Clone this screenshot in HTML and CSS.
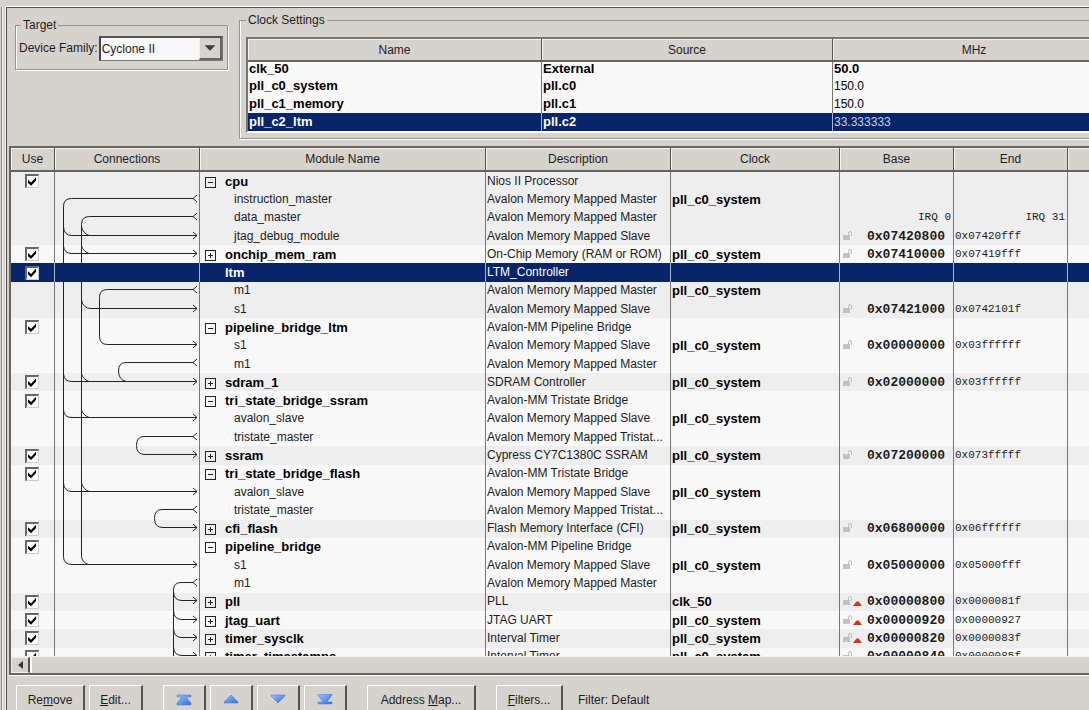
FILE: index.html
```html
<!DOCTYPE html>
<html lang="en">
<head>
<meta charset="utf-8">
<title>System Contents</title>
<link rel="stylesheet" href="styles.css">
</head>
<body>
<svg class="defs" aria-hidden="true">
  <symbol id="lock" viewBox="0 0 10 10"><path d="M0 4h7v5H0z" fill="#c2c2c2"/><path d="M5.500 4V2.500Q5.500.5 7 .5T8.500 2.500V5" fill="none" stroke="#bdbdbd"/></symbol>
  <symbol id="warn" viewBox="0 0 9 5"><path d="M0 5L3.500.5h2L9 5z" fill="#d8301c"/></symbol>
  <linearGradient id="blue" x1="0" y1="0" x2="1" y2="1"><stop offset="0" stop-color="#9cc4ff"/><stop offset="1" stop-color="#2f6fdc"/></linearGradient>
</svg>
<div class="app">
  <main class="panel">
    <div class="top">
      <fieldset class="box target">
        <legend>Target</legend>
        <label for="family">Device Family:</label>
        <span class="combo">
          <select id="family"><option>Cyclone II</option></select>
          <svg class="arrow" viewBox="0 0 22 22" aria-hidden="true"><path d="M5 8h12l-6 6z" fill="#3a3a3a"/></svg>
        </span>
      </fieldset>
      <fieldset class="box clocks">
        <legend>Clock Settings</legend>
        <div class="clock-view">
          <table class="clock-table">
            <thead><tr><th>Name</th><th>Source</th><th>MHz</th></tr></thead>
            <tbody>
              <tr><td>clk_50</td><td>External</td><td>50.0</td></tr>
              <tr><td>pll_c0_system</td><td>pll.c0</td><td class="plain">150.0</td></tr>
              <tr><td>pll_c1_memory</td><td>pll.c1</td><td class="plain">150.0</td></tr>
              <tr class="selected"><td>pll_c2_ltm</td><td>pll.c2</td><td class="plain">33.333333</td></tr>
            </tbody>
          </table>
        </div>
      </fieldset>
    </div>

    <section class="modules">
      <div class="view">
        <table class="module-table">
          <colgroup><col class="c-use"><col class="c-conn"><col class="c-name"><col class="c-desc"><col class="c-clock"><col class="c-addr"><col class="c-addr"><col></colgroup>
          <thead><tr><th>Use</th><th>Connections</th><th>Module Name</th><th>Description</th><th>Clock</th><th>Base</th><th>End</th><th></th></tr></thead>
          <tbody>
            <tr><td><input type="checkbox" checked aria-label="Use cpu"></td><td></td><td class="mod"><button class="tree minus" aria-label="Collapse cpu"></button>cpu</td><td>Nios II Processor</td><td></td><td></td><td></td><td></td></tr>
            <tr><td></td><td></td><td class="port">instruction_master</td><td>Avalon Memory Mapped Master</td><td class="clk">pll_c0_system</td><td></td><td></td><td></td></tr>
            <tr><td></td><td></td><td class="port">data_master</td><td>Avalon Memory Mapped Master</td><td></td><td class="irq">IRQ 0</td><td class="irq">IRQ 31</td><td></td></tr>
            <tr><td></td><td></td><td class="port">jtag_debug_module</td><td>Avalon Memory Mapped Slave</td><td></td><td class="base"><svg class="lock"><use href="#lock"/></svg>0x07420800</td><td class="end">0x07420fff</td><td></td></tr>
          </tbody>
          <tbody>
            <tr><td><input type="checkbox" checked aria-label="Use onchip_mem_ram"></td><td></td><td class="mod"><button class="tree plus" aria-label="Expand onchip_mem_ram"></button>onchip_mem_ram</td><td>On-Chip Memory (RAM or ROM)</td><td class="clk">pll_c0_system</td><td class="base"><svg class="lock"><use href="#lock"/></svg>0x07410000</td><td class="end">0x07419fff</td><td></td></tr>
          </tbody>
          <tbody>
            <tr class="selected"><td><input type="checkbox" checked aria-label="Use ltm"></td><td></td><td class="mod"><button class="tree minus" aria-label="Collapse ltm"></button>ltm</td><td>LTM_Controller</td><td></td><td></td><td></td><td></td></tr>
            <tr><td></td><td></td><td class="port">m1</td><td>Avalon Memory Mapped Master</td><td class="clk">pll_c0_system</td><td></td><td></td><td></td></tr>
            <tr><td></td><td></td><td class="port">s1</td><td>Avalon Memory Mapped Slave</td><td></td><td class="base"><svg class="lock"><use href="#lock"/></svg>0x07421000</td><td class="end">0x0742101f</td><td></td></tr>
          </tbody>
          <tbody>
            <tr><td><input type="checkbox" checked aria-label="Use pipeline_bridge_ltm"></td><td></td><td class="mod"><button class="tree minus" aria-label="Collapse pipeline_bridge_ltm"></button>pipeline_bridge_ltm</td><td>Avalon-MM Pipeline Bridge</td><td></td><td></td><td></td><td></td></tr>
            <tr><td></td><td></td><td class="port">s1</td><td>Avalon Memory Mapped Slave</td><td class="clk">pll_c0_system</td><td class="base"><svg class="lock"><use href="#lock"/></svg>0x00000000</td><td class="end">0x03ffffff</td><td></td></tr>
            <tr><td></td><td></td><td class="port">m1</td><td>Avalon Memory Mapped Master</td><td></td><td></td><td></td><td></td></tr>
          </tbody>
          <tbody>
            <tr><td><input type="checkbox" checked aria-label="Use sdram_1"></td><td></td><td class="mod"><button class="tree plus" aria-label="Expand sdram_1"></button>sdram_1</td><td>SDRAM Controller</td><td class="clk">pll_c0_system</td><td class="base"><svg class="lock"><use href="#lock"/></svg>0x02000000</td><td class="end">0x03ffffff</td><td></td></tr>
          </tbody>
          <tbody>
            <tr><td><input type="checkbox" checked aria-label="Use tri_state_bridge_ssram"></td><td></td><td class="mod"><button class="tree minus" aria-label="Collapse tri_state_bridge_ssram"></button>tri_state_bridge_ssram</td><td>Avalon-MM Tristate Bridge</td><td></td><td></td><td></td><td></td></tr>
            <tr><td></td><td></td><td class="port">avalon_slave</td><td>Avalon Memory Mapped Slave</td><td class="clk">pll_c0_system</td><td></td><td></td><td></td></tr>
            <tr><td></td><td></td><td class="port">tristate_master</td><td>Avalon Memory Mapped Tristat...</td><td></td><td></td><td></td><td></td></tr>
          </tbody>
          <tbody>
            <tr><td><input type="checkbox" checked aria-label="Use ssram"></td><td></td><td class="mod"><button class="tree plus" aria-label="Expand ssram"></button>ssram</td><td>Cypress CY7C1380C SSRAM</td><td class="clk">pll_c0_system</td><td class="base"><svg class="lock"><use href="#lock"/></svg>0x07200000</td><td class="end">0x073fffff</td><td></td></tr>
          </tbody>
          <tbody>
            <tr><td><input type="checkbox" checked aria-label="Use tri_state_bridge_flash"></td><td></td><td class="mod"><button class="tree minus" aria-label="Collapse tri_state_bridge_flash"></button>tri_state_bridge_flash</td><td>Avalon-MM Tristate Bridge</td><td></td><td></td><td></td><td></td></tr>
            <tr><td></td><td></td><td class="port">avalon_slave</td><td>Avalon Memory Mapped Slave</td><td class="clk">pll_c0_system</td><td></td><td></td><td></td></tr>
            <tr><td></td><td></td><td class="port">tristate_master</td><td>Avalon Memory Mapped Tristat...</td><td></td><td></td><td></td><td></td></tr>
          </tbody>
          <tbody>
            <tr><td><input type="checkbox" checked aria-label="Use cfi_flash"></td><td></td><td class="mod"><button class="tree plus" aria-label="Expand cfi_flash"></button>cfi_flash</td><td>Flash Memory Interface (CFI)</td><td class="clk">pll_c0_system</td><td class="base"><svg class="lock"><use href="#lock"/></svg>0x06800000</td><td class="end">0x06ffffff</td><td></td></tr>
          </tbody>
          <tbody>
            <tr><td><input type="checkbox" checked aria-label="Use pipeline_bridge"></td><td></td><td class="mod"><button class="tree minus" aria-label="Collapse pipeline_bridge"></button>pipeline_bridge</td><td>Avalon-MM Pipeline Bridge</td><td></td><td></td><td></td><td></td></tr>
            <tr><td></td><td></td><td class="port">s1</td><td>Avalon Memory Mapped Slave</td><td class="clk">pll_c0_system</td><td class="base"><svg class="lock"><use href="#lock"/></svg>0x05000000</td><td class="end">0x05000fff</td><td></td></tr>
            <tr><td></td><td></td><td class="port">m1</td><td>Avalon Memory Mapped Master</td><td></td><td></td><td></td><td></td></tr>
          </tbody>
          <tbody>
            <tr><td><input type="checkbox" checked aria-label="Use pll"></td><td></td><td class="mod"><button class="tree plus" aria-label="Expand pll"></button>pll</td><td>PLL</td><td class="clk">clk_50</td><td class="base"><svg class="lock"><use href="#lock"/></svg><svg class="warn"><use href="#warn"/></svg>0x00000800</td><td class="end">0x0000081f</td><td></td></tr>
          </tbody>
          <tbody>
            <tr><td><input type="checkbox" checked aria-label="Use jtag_uart"></td><td></td><td class="mod"><button class="tree plus" aria-label="Expand jtag_uart"></button>jtag_uart</td><td>JTAG UART</td><td class="clk">pll_c0_system</td><td class="base"><svg class="lock"><use href="#lock"/></svg><svg class="warn"><use href="#warn"/></svg>0x00000920</td><td class="end">0x00000927</td><td></td></tr>
          </tbody>
          <tbody>
            <tr><td><input type="checkbox" checked aria-label="Use timer_sysclk"></td><td></td><td class="mod"><button class="tree plus" aria-label="Expand timer_sysclk"></button>timer_sysclk</td><td>Interval Timer</td><td class="clk">pll_c0_system</td><td class="base"><svg class="lock"><use href="#lock"/></svg><svg class="warn"><use href="#warn"/></svg>0x00000820</td><td class="end">0x0000083f</td><td></td></tr>
          </tbody>
          <tbody>
            <tr><td><input type="checkbox" checked aria-label="Use timer_timestamps"></td><td></td><td class="mod"><button class="tree plus" aria-label="Expand timer_timestamps"></button>timer_timestamps</td><td>Interval Timer</td><td class="clk">pll_c0_system</td><td class="base"><svg class="lock"><use href="#lock"/></svg><svg class="warn"><use href="#warn"/></svg>0x00000840</td><td class="end">0x0000085f</td><td></td></tr>
          </tbody>
        </table>
        <svg class="wires" viewBox="0 0 144 494" aria-hidden="true">
          <!-- instruction_master and data_master buses -->
          <path d="M138 26.500H16.500Q8.500 26.500 8.500 34.500V384.500Q8.500 392.500 17 392.500H142"/>
          <path d="M138 44.500H34.500Q26.500 44.500 26.500 52.500V384.500Q27 390 33 392.500"/>
          <path d="M8.500 55Q9 63.500 17 63.500H142M8.500 74Q9 81.500 17 81.500H142M8.500 202Q9 209.500 17 209.500H142M8.500 238Q9 245.500 17 245.500H142M8.500 311Q9 319.500 17 319.500H142"/>
          <path d="M26.500 55Q28 61 34 63.500M26.500 74Q28 79 34 81.500M26.500 128Q28 136.500 36 136.500H142M26.500 202Q28 207 34 209.500M26.500 238Q28 243 34 245.500M26.500 311Q28 317 34 319.500"/>
          <!-- ltm and bridge links -->
          <path d="M138 117.500H52.500Q44.500 117.500 44.500 125.500V164.500Q44.500 172.500 52.500 172.500H142"/>
          <path d="M138 190.500H71Q63.500 190.500 63.500 199T71 209.500"/>
          <path d="M138 264.500H89Q81.500 264.500 81.500 273.500T90 282.500H142"/>
          <path d="M138 337.500H107Q99.500 337.500 99.500 346.500T108 355.500H142"/>
          <path d="M138 410.500H126Q118.500 410.500 118.500 418V494M118.500 420Q119 428.500 127 428.500H142M118.500 439Q119 447.500 127 447.500H142M118.500 457Q119 465.500 127 465.500H142M118.500 475Q119 483.500 127 483.500H142"/>
          <!-- master forks -->
          <path d="M142 23L138 26.500L142 30M142 41L138 44.500L142 48M142 114L138 117.500L142 121M142 187L138 190.500L142 194M142 261L138 264.500L142 268M142 334L138 337.500L142 341M142 407L138 410.500L142 414"/>
          <!-- slave arrows -->
          <path d="M138 60L142 63.500L138 67M138 78L142 81.500L138 85M138 133L142 136.500L138 140M138 169L142 172.500L138 176M138 206L142 209.500L138 213M138 242L142 245.500L138 249M138 279L142 282.500L138 286M138 316L142 319.500L138 323M138 352L142 355.500L138 359M138 389L142 392.500L138 396M138 425L142 428.500L138 432M138 444L142 447.500L138 451M138 462L142 465.500L138 469M138 480L142 483.500L138 487"/>
        </svg>
      </div>
      <div class="scrollbar">
        <button class="scroll-left" aria-label="Scroll left"><svg viewBox="0 0 6 10"><path d="M6 1v8L1 5z" fill="#333"/></svg></button>
        <div class="thumb"></div>
      </div>
    </section>

    <div class="toolbar">
      <button class="btn remove">Re<u>m</u>ove</button>
      <button class="btn edit"><u>E</u>dit...</button>
      <div class="moves">
        <button class="btn move" aria-label="Move to top"><svg viewBox="0 0 16 12"><path d="M1 1h14v2h-5l5 6v2H1V9l5-6H1z" fill="url(#blue)" stroke="#3f74cc" stroke-width=".5"/></svg></button>
        <button class="btn move" aria-label="Move up"><svg viewBox="0 0 16 12"><path d="M8 1l7 7v1H1V8z" fill="url(#blue)" stroke="#3f74cc" stroke-width=".5"/></svg></button>
        <button class="btn move" aria-label="Move down"><svg viewBox="0 0 16 12"><path d="M1 1h14v1L8 9 1 2z" fill="url(#blue)" stroke="#3f74cc" stroke-width=".5"/></svg></button>
        <button class="btn move" aria-label="Move to bottom"><svg viewBox="0 0 16 12"><path d="M1 0h14v1l-5 7h5v2H1V8h5L1 1z" fill="url(#blue)" stroke="#3f74cc" stroke-width=".5"/></svg></button>
      </div>
      <button class="btn address">Address <u>M</u>ap...</button>
      <button class="btn filters"><u>F</u>ilters...</button>
      <span class="filter">Filter: Default</span>
    </div>
  </main>
</div>
</body>
</html>
```

FILE: styles.css
```css
* { box-sizing: border-box; }
body {
  margin: 0;
  overflow: hidden;
  background: #d6d3ce;
  color: #1c1c1c;
  font: 12px/16px "Liberation Sans", Arial, sans-serif;
}
.defs { position: absolute; width: 0; height: 0; }
button, select, input { font: inherit; color: inherit; margin: 0; }

/* The window is slightly narrower than its contents. */
.app {
  width: calc(100vw + 28px);
  height: 100vh;
  padding: 7px 0 0 6px;
}
.panel {
  display: flex;
  flex-direction: column;
  height: 100%;
  border-top: 1px solid #55534f;
  border-left: 1px solid #55534f;
  box-shadow: 0 -1px #fff, -1px 0 #f0eeea, -3px 0 #d6d3ce, -4px 0 #f4f3f0, -5px 0 #8a8884;
}

.top { display: flex; gap: 11px; padding: 4px 0 0 8px; height: 138px; }
.box {
  margin: 0;
  border: 1px solid #97958f;
  box-shadow: 1px 1px #fff, inset 1px 0 #fff;
}
.box legend { padding: 0 2px; }
.target {
  display: flex;
  align-items: center;
  width: 213px;
  height: 53px;
  margin-top: 5px;
  padding: 0 4px 6px 3px;
}
.target legend { margin-left: 2px; }
.combo {
  position: relative;
  flex: 1;
  height: 25px;
  margin-left: 1px;
  border: 1px solid #777;
  border-top: 2px solid #555;
  border-left: 2px solid #444;
}
.combo select {
  width: 100%;
  height: 100%;
  padding: 0 1px;
  border: 0;
  border-radius: 0;
  background: #f8f8f8;
  appearance: none;
}
.combo .arrow {
  position: absolute;
  top: 0;
  right: 0;
  width: 23px;
  height: 22px;
  background: #d6d3ce;
  border-right: 2px solid #666;
  border-bottom: 2px solid #666;
  border-left: 1px solid #eee;
  pointer-events: none;
}
.clocks { flex: 1; min-width: 0; height: 127px; padding: 9px 0 0 6px; }
.clock-view { border: solid #77756f; border-width: 2px 0 0 2px; border-bottom: 2px solid #fff; background: #f8f8f8; }

table { border-collapse: separate; border-spacing: 0; table-layout: fixed; width: 100%; }
th {
  font-weight: normal;
  padding: 0;
  background: #d6d3ce;
  border-right: 1px solid #55534f;
  border-bottom: 2px solid #66645f;
  box-shadow: inset 1px 1px #f4f3f0;
}
td {
  padding: 0 2px 0 1px;
  border-right: 1px solid #777;
  overflow: hidden;
  white-space: nowrap;
}
.clock-table { font-size: 13px; color: #000; }
.clock-table th { height: 23px; font-size: 12px; color: #1c1c1c; }
.clock-table th:first-child { width: 294px; }
.clock-table th:nth-child(2) { width: 291px; }
.clock-table td { height: 18px; font-weight: bold; }
.clock-table tr:first-child td { height: 15px; padding-bottom: 2px; line-height: 13px; }
.clock-table td.plain { font-weight: normal; font-size: 12px; }
.selected td { background: #08246b; color: #fff; border-right-color: #aab2c8; }
.clock-table .selected .plain { color: #c8cede; }

.modules {
  flex: 1;
  display: flex;
  flex-direction: column;
  min-height: 0;
  margin-left: 2px;
  border: 2px solid #66645f;
  border-right: 0;
  box-shadow: 0 1px #fff;
}
.view { position: relative; flex: 1; min-height: 0; overflow: hidden; background: #f8f8f8; }
.module-table { height: 518px; }
.module-table th { height: 24px; }
.module-table tbody:nth-of-type(odd) { background: #eeeeee; }
.module-table td { line-height: 15px; }
.module-table td:first-child { text-align: center; }
.c-use { width: 44px; }
.c-conn { width: 145px; }
.c-name { width: 286px; }
.c-desc { width: 185px; }
.c-clock { width: 169px; }
.c-addr { width: 114px; }
.module-table .mod { padding-left: 5px; font-size: 13px; font-weight: bold; color: #000; }
.module-table .selected .mod { color: #fff; }
.module-table .port { padding-left: 34px; }
.module-table .clk { font-size: 13px; font-weight: bold; color: #000; }
.irq, .end, .base { font-family: "Liberation Mono", monospace; font-size: 11px; }
.irq { text-align: right; }
.module-table .base {
  padding-right: 8px;
  text-align: right;
  font-size: 13px;
  font-weight: bold;
}
.lock { float: left; width: 10px; height: 10px; margin: 2px 0 0 2px; }
.warn { float: left; width: 9px; height: 5px; margin-top: 7px; }
input[type="checkbox"] {
  appearance: none;
  display: block;
  width: 14px;
  height: 14px;
  margin: 0 auto;
  background: #fff;
  border: 1px solid #ccc;
  border-top: 2px solid #666;
  border-left: 2px solid #666;
}
input[type="checkbox"]:checked::before {
  content: "";
  display: block;
  width: 9px;
  height: 9px;
  margin: 1px;
  background: #000;
  clip-path: polygon(0 30%, 34% 60%, 90% 0, 90% 36%, 34% 95%, 0 65%);
}
.tree {
  width: 11px;
  height: 11px;
  margin-right: 9px;
  padding: 0;
  border: 1px solid #222;
  vertical-align: -1px;
  background: linear-gradient(#222, #222) center / 5px 1px no-repeat;
}
.plus { background: linear-gradient(#222, #222) center / 5px 1px no-repeat, linear-gradient(#222, #222) center / 1px 5px no-repeat; }
.wires {
  position: absolute;
  top: 24px;
  left: 44px;
  width: 144px;
  height: 494px;
  fill: none;
  stroke: #222;
}

.scrollbar { display: flex; height: 17px; background: #d6d3ce; border-top: 1px solid #f4f3f0; }
.scroll-left {
  width: 19px;
  padding: 0;
  border: 1px solid #eee;
  border-right: 2px solid #55534f;
  background: #d6d3ce;
}
.scroll-left svg { display: block; width: 6px; height: 10px; margin: 0 auto; }
.thumb { flex: 1; border-left: 2px solid #fff; }

.toolbar { display: flex; height: 35px; padding: 10px 0 0 9px; overflow: hidden; }
.btn {
  height: 30px;
  padding: 0;
  background: #d6d3ce;
  border: 1px solid #fff;
  border-right: 2px solid #55534f;
  border-bottom: 2px solid #55534f;
}
.remove { width: 69px; }
.edit { width: 54px; margin-left: 4px; }
.moves { display: flex; gap: 4px; margin: 0 20px; }
.move { width: 43px; }
.move svg { display: block; width: 16px; height: 12px; margin: 0 auto; }
.address { width: 109px; }
.filters { width: 67px; margin-left: 20px; }
.filter { margin-left: 15px; line-height: 30px; }
```
